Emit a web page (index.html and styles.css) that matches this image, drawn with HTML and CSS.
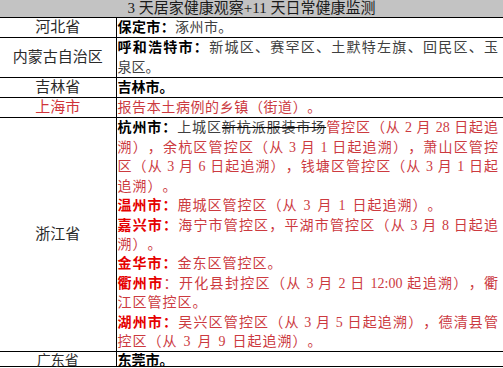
FILE: index.html
```html
<!DOCTYPE html>
<html lang="zh-CN">
<head>
<meta charset="utf-8">
<title>3 天居家健康观察+11 天日常健康监测</title>
<link rel="stylesheet" href="styles.css">
</head>
<body>
<table class="tbl">
  <colgroup><col class="c1"><col class="c2"></colgroup>
  <thead>
    <tr><th colspan="2" class="hd">3 天居家健康观察+11 天日常健康监测</th></tr>
  </thead>
  <tbody>
    <tr>
      <td class="prov">河北省</td>
      <td class="det"><div class="ln sp"><b>保定市：</b>涿州市。</div></td>
    </tr>
    <tr>
      <td class="prov">内蒙古自治区</td>
      <td class="det">
        <div class="ln j"><b>呼和浩特市：</b>新城区、赛罕区、土默特左旗、回民区、玉</div>
        <div class="ln">泉区。</div>
      </td>
    </tr>
    <tr>
      <td class="prov">吉林省</td>
      <td class="det"><div class="ln"><b>吉林市。</b></div></td>
    </tr>
    <tr>
      <td class="prov red">上海市</td>
      <td class="det"><div class="ln red wide">报告本土病例的乡镇（街道）。</div></td>
    </tr>
    <tr>
      <td class="prov">浙江省</td>
      <td class="det zj">
        <div class="ln j"><b>杭州市：</b>上城区<span class="del">新杭派服装市场</span><span class="red">管控区（从 2 月 28 日起追</span></div>
        <div class="ln j red">溯），余杭区管控区（从 3 月 1 日起追溯），萧山区管控</div>
        <div class="ln j red">区（从 3 月 6 日起追溯），钱塘区管控区（从 3 月 1 日起</div>
        <div class="ln red">追溯）。</div>
        <div class="ln red"><b class="rb">温州市：</b>鹿城区管控区（从 3 月 1 日起追溯）。</div>
        <div class="ln j red"><b class="rb">嘉兴市：</b>海宁市管控区，平湖市管控区（从 3 月 8 日起追</div>
        <div class="ln red">溯）。</div>
        <div class="ln red"><b class="rb">金华市：</b>金东区管控区。</div>
        <div class="ln j red"><b class="rb">衢州市</b>：开化县封控区（从 3 月 2 日 12:00 起追溯），衢</div>
        <div class="ln red">江区管控区。</div>
        <div class="ln j red"><b class="rb">湖州市：</b>吴兴区管控区（从 3 月 5 日起追溯），德清县管</div>
        <div class="ln red">控区（从 3 月 9 日起追溯）。</div>
      </td>
    </tr>
    <tr class="last">
      <td class="prov">广东省</td>
      <td class="det"><div class="ln"><b>东莞市。</b></div></td>
    </tr>
  </tbody>
</table>
</body>
</html>
```

FILE: styles.css
```css
html, body {
  margin: 0;
  padding: 0;
  background: #ffffff;
}

body {
  font-family: "Liberation Serif", "Noto Sans CJK SC", serif;
  width: 503px;
  height: 368px;
  overflow: hidden;
  text-spacing-trim: space-all;
}

.tbl {
  width: 503px;
  border-collapse: collapse;
  table-layout: fixed;
}

.c1 {
  width: 116px;
}

.hd {
  background: #c3c3c3;
  font-size: 15px;
  font-weight: normal;
  line-height: 17px;
  height: 17px;
  padding: 0;
  border-bottom: 1px solid #000;
  color: #1a1a1a;
  text-align: center;
}

td {
  border-top: 1px solid #000;
  border-bottom: 1px solid #000;
  padding: 0;
}

.prov {
  border-right: 1px solid #000;
  text-align: center;
  vertical-align: middle;
  font-size: 15px;
  color: #2a2a2a;
  line-height: 19px;
}

.det {
  font-size: 14px;
  line-height: 19.3px;
  padding: 0 5px 0 1px;
  color: #404040;
  vertical-align: top;
}

.zj {
  line-height: 19.4px;
}

.last td {
  font-family: "Noto Sans CJK SC", sans-serif;
  font-size: 14px;
  line-height: 14px;
  height: 14px;
  vertical-align: middle;
}

.ln {
  white-space: nowrap;
  word-spacing: 1.5px;
}

.j {
  text-align: justify;
  text-align-last: justify;
  word-spacing: 0;
}

.red.ln:not(.j) {
  letter-spacing: 1px;
}

.red.ln.wide {
  letter-spacing: 0.6px;
}

.sp {
  letter-spacing: 0.4px;
}

b {
  font-weight: 700;
  color: #000;
}

.red {
  color: #cc3a3f;
}

.prov.red {
  color: #d0343a;
}

b.rb {
  color: #e50000;
}

.del {
  text-decoration: line-through;
  text-decoration-color: #000;
}
```
